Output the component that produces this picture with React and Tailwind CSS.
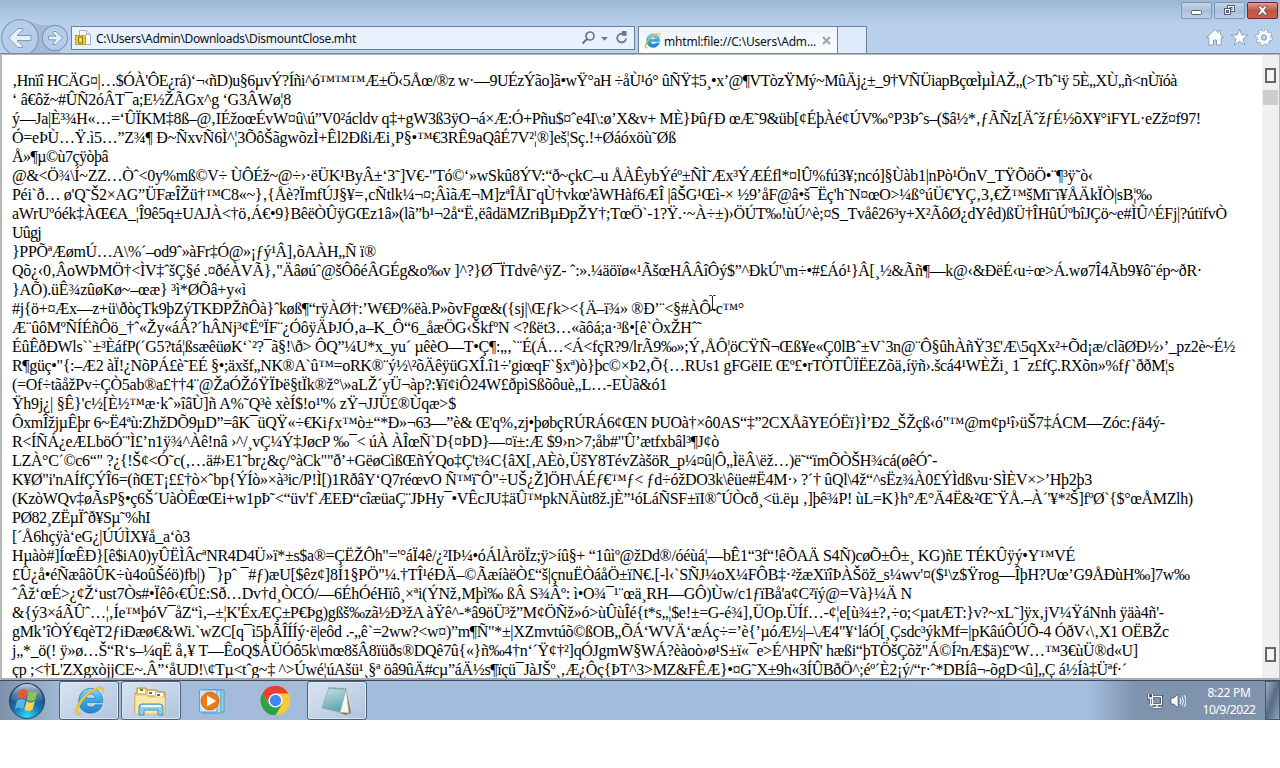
import { useLayoutEffect, useRef } from "react";

// Each entry: right edge of the line in pixels, then its text.
const LINES = [
  [1177, "‚Hnïî HCÄG¤|…$ÓÀ'ÔE¿rá)‘¬‹ñD)u§6µvÝ?Íñi^ó™™™Æ±Ö‹5Åœ/®z w·—9UÉzÝão]ã•wŸ°aH ÷åÙ¹ó° ûÑŸ‡5¸•x’@¶VTòzŸMý~MûÄj¿±_9†VÑÜiapBçœÌµÌAŽ„(>Tbˆ¹ÿ 5È„XÙ„ñ<nÙïóà"],
  [291, "‘ â€ôž~#ÛÑ2óÂT¯a;E½ŽÃGx^g ‘G3ÂWø¦8"],
  [1201, "ý—Ja|È³¾H«…=‘ÛÏKM‡8ß–@‚IÉžoœÉvW¤û\\ú”V0²ácldv q‡+gW3ß3ÿO¬á×Æ:Ó+Pñu$¤ˆe4I\\:ø’X&v+ MÈ}ÞûƒÐ œÆ˜9&üb[¢ÉþÀé¢ÚV‰°P3Þˆs–($â½*‚ƒÃÑz[ÄˆžƒÉ½õX¥°iFYL·eZž¤f97!"],
  [676, "Ó=eÞÙ…Ÿ.ì5…”Z¾¶ Ð~ÑxvÑ6Ì^¦3ÕôŠãgwõzÌ+Êl2ÐßiÆi¸P§•™€3RÊ9aQâÉ7V²¦®]eš¦Sç.!+Øáóxöù˜Øß"],
  [108, "Å»¶µ©ù7çÿòþâ"],
  [1093, "@&<Ö¾\\Í~ZZ…Òˆ<0y%mß©V÷ ÙÔÉž~@÷›·ëÜK¹ByÂ±‘3˜]V€-\"Tó©‘»wSkû8ÝV:“ð~çkC–u ÅÀÊybÝéº±ÑÌ˜Æx³ÝÆÉfl*¤lÛ%fú3¥;ncó]§Ùàb1|nPò¹ÖnV_TŸÕöÖ•¨¶³ÿ˜ò‹"],
  [1152, "Péi`ð… ø'Q˜Š2×AG”ÜFæÎŽü†™C8«~}‚{Åè?ÏmfÚJ§¥=‚cÑtlk¼¬¤;ÂìãÆ¬M]zªÎÅI˜qÙ†vkœ'àWHàf6ÆÎ |âŠG¹Œì-× ½9’åF@â•š¯Ëç'h˜N¤œO>¼ß°úÜ€'YÇ‚3‚€Ž™šMï˜ï¥ÅÄkÏÒ|sB¦‰"],
  [1227, "aWrUºóék‡ÀŒ€A_¦Î9ê5q±UAJÀ<†ö‚Á€•9}BêëÒÛÿGŒz1â»(lã”b¹¬2å“Ë‚ëâdäMZriBµÐpŽY†;TœÖ`-1?Ÿ.·~À÷±)›ÖÚT‰!ùÚ^è;¤S_Tvåê26³y+X²ÃôØ¿dYêd)ßÜ†ÎHûÚºbîJÇö~e#ÌÛ^ÉFj|?útïfvÒ"],
  [41, "Uûgj"],
  [376, "}PPÕªÆømÚ…A\\%´–od9ˆ»àFr‡Ó@»¡ƒý¹Â]‚õAÀH„Ñ ï®"],
  [1202, "Qõ¿‹0‚ÂoWÞMÖ†<ÌV‡ˆšÇ§é .¤ðéÀVÃ}‚\"Äâøúˆ@šÔôéÂGÉg&o‰v ]^?}Ø¯ÏTdvê^ÿZ- ˆ:».¼äöïø«¹ÃšœHÂÂîÔý$”^ÐkÚ'\\m÷•#£Áó¹}Â[¸½&Ãñ¶—k@‹&ÐëÉ‹u÷œ>Á.wø7Î4Ãb9¥ô¨ép~ðR·"],
  [246, "}AÕ).üÊ¾zûøKø~–œæ} ³ì*ØÕâ+y«ì"],
  [744, "#j{ö+¤Æx—z+ü\\ðòçTk9þZýTKÐPŽñÔà}ˆkøß¶“rÿÀØ†:’W€Ð%ëà.P»õvFgœ&({sj|\\Œƒk><{Ä–ï¾» ®Ð’¨<§#ÀÔ-c™°"],
  [702, "Æ¨ûôMºÑÍÉñÔö_†ˆ«Žy«áÂ?´hÂNj³¢ËºÏF¨¿ÓôÿÄÞJÓ‚a–K_Ô“6_åæÖG‹ŠkfºN <?ßët3…«ãôá;a·³ß•[ê`ÒxŽHˆ˜"],
  [1235, "ÉûÊðÐWls``±³ÈáfP(´G5?tá¦ßsæêüøK‘`²?¯ã§!\\ð> ÔQ”¼U*x_yu´ µêèO—T•Ç¶:„‚`¨É(Á…<Á<fçR?9/lrÃ9‰»;Ý‚ÅÔ¦öCŸÑ¬Œß¥e«Ç0lBˆ±V`3n@¨Ô§ûhÀñŸ3£'Æ\\5qXx²+Õd¡æ/clãØÐ½›’_pz2è~É½"],
  [1174, "R¶güç•\"{:–Æ2 àÏ!¿NõPÁ£è˜EÉ §•;äxšf„NK®A`û™=oRK®¨ý½\\²õÄêÿüGXÎ.î1÷'giœqF`§xª)ò}þc©×Þ2‚Õ{…RUs1 gFGëIE Œº£•rTÒTÛÏËEZõä‚íÿñ›.šcá4¹WÈŽi¸ 1¯z£fÇ.RXõn»%fƒ`ððM¦s"],
  [667, "(=Of÷tãåžPv÷ÇÒ5ab®a£††4¨@ŽaÓŽóŸÏÞë§tÏk®ž°\\»aLŽ´yÜ¬àp?:¥ï¢iÔ24W£ðpìSßõôuè„L…-EÙã&ó1"],
  [456, "Ÿh9j¿| §Ê}'c½[È½™æ·kˆ»îâÙ]ñ A%˜Q³è xèÍ$!o¹'% zŸ¬JJÜ£®Ùqæ>$"],
  [1165, "ÔxmÎžjµÊþr 6~Ë4ªù:ZhžDÕ9µD”=âK¯üQŸ«÷€Kiƒx™ò±“*Ð»¬63—”è& Œ'q%‚zj•þøbçRÚRÁ6¢ŒN ÞUOà†×ô0AS“‡”2CXÅãYEÓËï}Ì’Ð2_ŠŽçß‹ó\"™@m¢p¹î›üŠ7‡ÁCM—Zóc:ƒä4ý-"],
  [719, "R<ÍÑÁ¿eÆLböÓ¨'Ì£’n1ÿ¾^Àê!nâ ›^/¸vÇ¼Ý‡JøcP ‰¯< úÀ ÀÎœÑ`D{¤ÞD}—¤ï±:Æ $9›n>7;åb#\"Û’ætfxbâl³¶J¢ò"],
  [937, "LZÀ°C´©c6“\" ?¿{!Š¢<Ó˜c(‚…ä#›E1˜br¿&ç/°àCk\"\"ð’+GëøCìßŒñÝQo‡Ç't¾C{âX[‚AÈò‚ÜšY8TévZàšöR_p¼¤û|Ô„ÌëÂ\\ëž…)ë˜“ïmÕÒŠH¾cá(øêÓˆ-"],
  [1092, "K¥Ø\"i'nAÍfÇÝÎ6=(ñŒT¡££†ò×ˆbp{ÝÍò»×à³ic/P!Ì[)1RðâY‘Q7réœvO Ñ™ï˜Ô\"÷UŠ¿Ž]ÖH\\ÁÉƒ€™ƒ< ƒd÷óžDO3k\\êüe#Ë4M·› ?´† ûQl\\4ž“^sËz¾À0£ÝÌdßvu·SÌÈV×>’Hþ2þ3"],
  [1193, "(KzòWQv‡øÃsP§•ç6Š´UàÒÊœŒi+w1pÞ˜<“üv'f`ÆEÐ“cîæüaÇ¨JÞHy¯•VÊcJU‡äÛ™pkNÄùt8ž.jÈ”¹óLáÑSF±ïI®ˆÚÒcð¸<ü.ëµ ‚]þê¾P! ùL=K}h°Æ°Ä4Ë&²Œ˜ŸÅ.–À´'¥*²Š]fºØ`{$°œÅMZlh)"],
  [150, "PØ82¸ZËµÏˆð¥Sµ˜%hI"],
  [190, "[´Å6hçÿà‘eG¿|ÚÚÌX¥å_a‘ò3"],
  [1075, "Hµàò#]ÍœÊÐ}[ê$iA0)yÛËÌÂcªNR4D4Ü»ï*±s$a®=ÇËŽÔh\"='°áÏ4ê/¿²IÞ¼•óÁlÀröÏz;ÿ>íû§+ “1ûìº@žDd®/óéùá¦—bÊ1“3f“!êÕAÄ S4Ñ)cøÕ±Ô±¸ KG)ñE TÉKÛÿý•Y™VÉ"],
  [1190, "£Û¿å•éÑæâõÛK÷ù4oûŠéö)fb|) ¯}pˆ ¯#ƒ)æU[$êz¢]8Í1§PÖ\"¼.†TÎ¹éÐÄ–©ÃæíàëÒ£“š|çnuËÒáåÖ±ïN€.[-l‹`SÑJ¼oX¼FÔB‡·²žæXïîÞÀŠöž_s¼wv'¤($¹\\z$Ÿrog—ÎþH?Uœ’G9ÅÐùH‰]7w‰"],
  [912, "ˆÂž‘œÉ>¿¢Ž‘ust7Òs#•Ïêô‹€Û£:Sð…Dv†d¸ÒCÓ/—6ÉhÓéHïô¸×ªi(ÝNž‚Mþì‰ ßÂ S¾Âº: ì•O¾¯¹¨œä¸RH—GÔ)Ùw/c1ƒïBå'a¢C²ïý@=Và}¼Ä N"],
  [1164, "&{ý3×áÃÛˆ…¦‚Íe™þóV¯åZ“ì‚–±¦K'ÉxÆÇ±P€Þg)gßš‰zã½Ð³žA àŸê^-*â9öÜ³ž”M¢ÖÑž»ó>ùÛùÎé{t*s„¦$e!±=G-é¾]‚ÜOp.ÜÍf…-¢¦e[ù¾±?‚÷o;<µatÆT:}v?~xL˜]ÿx‚jV¼ŸáNnh ÿäà4ñ'-"],
  [1169, "gMk’îÒÝ€qèT2ƒiÐæø€&Wi.`wZC[q¯ì5þÃÎÍÍý·ë|eôd .-„ê`=2ww?<w¤)”m¶Ñ\"*±|XZmvtúõ©ßOB„ÕÁ‘WVÄ‘æÁç÷=’è{’µóÆ½|–\\Æ4\"¥‘láÓ[¸Çsdc³ýkMf=|pKâúÔÚÕ-4 ÓðV‹\\‚X1 OËBŽc"],
  [1138, "j„*_ö(! ÿ»ø…Š“R‘s–¼qË å‚¥ T—ÊoQ$ÀÜÓô5k\\mœ8šÂ8ïüðs®DQê7û{«}ñ‰4†n‘´Ÿ¢†²]qÓJgmW§WÁ?èàoò›ø¹S±ï«¯e>É^HPÑ' hæßi“þTÖšÇõž\"Á©Í²nÆ$ä)£ºW…™3€ùÜ®d«U]"],
  [1127, "çp ;<†L'ZXgxòjjCE~.Â”‘åUD!\\¢Tµ<tˆg~‡ ^>Úwé¦úAšü¹¸§ª öâ9ûÄ#cµ”áÄ½s¶ïçü¯JàJŠº¸‚Æ¿Ôç{ÞT^3>MZ&FÊÆ}•¤G˜X±9h«3ÍÛBðÖ^;éº´È2¡ý/“r·ˆ*DBÍâ¬-õgD<û]„Ç á½Íà‡Üªf·´"],
];

// Tracks the text so that it fills the given width exactly.
function Fit({ width, children }) {
  const ref = useRef(null);
  useLayoutEffect(() => {
    const el = ref.current;
    el.style.letterSpacing = "0.001px";
    const natural = el.getBoundingClientRect().width;
    el.style.letterSpacing = (width - natural) / children.length + "px";
  }, [width, children]);
  return <span ref={ref} className="inline-block whitespace-pre">{children}</span>;
}

function Nav() {
  return (
    <svg className="h-[53px] w-[71px] shrink-0" viewBox="0 0 71 53">
      <path d="M28 20Q37 26 47 25L64 31L60 53H30Z" fill="#a4bad5" />
      <circle cx="20" cy="38" r="18.3" fill="#b4cde9" stroke="#7d96b5" strokeWidth="1.1" />
      <circle cx="55" cy="38" r="12.6" fill="#b4cde9" stroke="#7d96b5" strokeWidth="1.1" />
      <path d="M8.500 38 18 28.500h4.500v1.800L17 35.500h14v5H17l5.500 5.200v1.800H18Z" fill="#e7eff9" stroke="#7f98b8" />
      <path d="M62.500 38 56 31.500h-3v1.700l3 3h-7.500v3.600H56l-3 3v1.700h3Z" fill="#e7eff9" stroke="#7f98b8" />
    </svg>
  );
}

function IeLogo({ className }) {
  return (
    <svg className={className} viewBox="0 0 32 32">
      <defs>
        <linearGradient id="ieb" x1="0" y1="0" x2="0" y2="1">
          <stop offset="0" stopColor="#7fdcfb" />
          <stop offset=".5" stopColor="#36a8e6" />
          <stop offset="1" stopColor="#2183cb" />
        </linearGradient>
      </defs>
      <path d="M17 3.500C24.500 3.500 29.500 9 29.500 16v2H12.500c.3 3 2.200 4.800 5 4.800 2 0 3.500-.8 4.300-2.300h7.200C27.300 26 23 29 17.300 29 10 29 5 24 5 16.500S10 3.500 17 3.500Zm-4.400 10.200h9.500c-.3-2.600-2-4.300-4.700-4.300s-4.400 1.700-4.800 4.300Z" fill="url(#ieb)" stroke="#236fa9" strokeWidth=".7" />
      <path d="M30.500 8.500c.8-3 .3-5.200-1.500-6C25.500 1 16.500 4.500 9.500 12 3 19 .2 27 2.300 29.700c1.200 1.500 3.700.9 6.200-.4-2.600.7-4.200.4-4.500-1.200C3.300 25 7 18 12.500 12.300 18.500 6.300 25 3 28 4.200c1.600.6 2.300 2.200 2.500 4.300Z" fill="#f5c928" stroke="#dfa411" strokeWidth=".4" />
    </svg>
  );
}

function Caption({ kind }) {
  const close = kind === "close";
  return (
    <div className={"flex h-[17px] w-[31px] items-center justify-center rounded-[2px] border " + (close ? "border-[#6b2733] bg-linear-to-b from-[#dda095] via-[#c4513f] to-[#c96249]" : "border-[#8095b0] bg-linear-to-b from-[#c4d6ea] via-[#a9c0db] to-[#bcd2eb]")}>
      <svg width="15" height="13" viewBox="0 0 15 13">
        {kind === "min" && <rect x="2.500" y="6.500" width="10" height="4" rx="1" fill="#fff" stroke="#555f73" />}
        {kind === "max" && (
          <g fill="#f3f7fc" stroke="#555f73">
            <rect x="5.500" y="1.500" width="7" height="6" />
            <rect x="8" y="3.500" width="2" height="2" fill="#a9c0db" />
            <rect x="2.500" y="4.500" width="6" height="6" />
            <rect x="4.500" y="6.500" width="2" height="2" fill="#a9c0db" />
          </g>
        )}
        {close && <path d="M2.500 2h3l2 2.200 2-2.200h3L9.300 6.300 12.700 11h-3L7.500 8.500 5.300 11h-3l3.400-4.700Z" fill="#fff" stroke="#5d4450" strokeWidth=".8" />}
      </svg>
    </div>
  );
}

function Header() {
  return (
    <header className="relative flex h-[55px] bg-linear-to-b from-[#9cb7d5] from-0% via-[#b7cfeb] via-42% to-[#bad2ee]">
      <Nav />
      <div className="mt-[26px] flex h-[24px] w-[564px] items-center border border-[#6b7f99] bg-[#e9f1fc] px-[3px]">
        <svg className="h-[18px] w-[17px] shrink-0" viewBox="0 0 17 18">
          <path d="M4.500 1.500h7l4 4v10h-11Z" fill="#f7fafd" stroke="#a9b4c2" />
          <path d="M11.500 1.500v4h4" fill="#dfe7ef" stroke="#a9b4c2" />
          <rect x=".5" y="6.500" width="10" height="9" fill="#e9cf3a" stroke="#a48617" strokeDasharray="2 1" />
          <rect x="3.500" y="8" width="4" height="6" fill="#f6df4f" stroke="#8c7013" />
        </svg>
        <div className="ml-[4px] flex-1 pt-[2px] font-['Noto_Sans','Open_Sans',sans-serif] text-[12px] leading-[22px] text-[#111]">
          <Fit width={260}>{"C:\\Users\\Admin\\Downloads\\DismountClose.mht"}</Fit>
        </div>
        <svg className="mr-[2px] h-[18px] w-[50px]" viewBox="0 0 50 18">
          <circle cx="11" cy="7" r="4" fill="none" stroke="#6d7784" strokeWidth="1.700" />
          <path d="M8 10 3.500 14.500" stroke="#6d7784" strokeWidth="2.200" />
          <path d="M22 8h7l-3.500 3.800Z" fill="#6d7784" />
          <path d="M47 9.500a4.400 4.400 0 1 1-3-4.600" fill="none" stroke="#6d7784" strokeWidth="1.800" />
          <path d="M43 2l4.500 0V7L42.500 6.500Z" fill="#6d7784" />
        </svg>
      </div>
      <div className="ml-[3px] mt-[26px] flex h-[28px] w-[200px] items-center border border-b-0 border-[#6b7f99] bg-linear-to-b from-[#edf4fc] to-[#fafcff] pl-[5px]">
        <IeLogo className="h-[17px] w-[17px] shrink-0" />
        <div className="ml-[3px] flex-1 pt-[2px] font-['Noto_Sans','Open_Sans',sans-serif] text-[12px] leading-[22px] text-[#111]">
          <Fit width={152}>mhtml:file://C:\Users\Adm...</Fit>
        </div>
        <svg className="mr-[6px] h-[9px] w-[9px]" viewBox="0 0 9 9"><path d="m1 1 7 7M8 1 1 8" stroke="#a1a4a9" strokeWidth="2.200" /></svg>
      </div>
      <div className="mt-[26px] h-[28px] w-[29px] border border-b-0 border-l-0 border-[#6b7f99] bg-[#dfebfa]" />
      <div className="flex flex-1 flex-col items-end">
        <div className="mt-[2px] flex gap-[2px] pr-[2px]">
          <Caption kind="min" /><Caption kind="max" /><Caption kind="close" />
        </div>
        <svg className="mr-[7px] mt-[9px] h-[19px] w-[68px]" viewBox="0 0 68 19">
          <g fill="#fdfeff" stroke="#7890ae" strokeWidth=".8">
            <path d="M10 1.500 1.500 9.500h2.300V17h4.700v-5h3v5h4.700V9.500h2.300L15.500 6.700V2.500h-2.200v2.200Z" />
            <path d="m34.500 1 2.200 6h6.300l-5 4 1.900 6-5.400-3.700L29.100 17l1.900-6-5-4h6.300Z" />
          </g>
          <g fill="none">
            <circle cx="59" cy="9.500" r="6.800" stroke="#7890ae" strokeWidth="3.600" strokeDasharray="3.200 2.140" />
            <circle cx="59" cy="9.500" r="6.800" stroke="#fff" strokeWidth="2.400" strokeDasharray="2.400 2.940" strokeDashoffset="-.4" />
            <circle cx="59" cy="9.500" r="4.500" stroke="#fff" strokeWidth="3" />
            <circle cx="59" cy="9.500" r="2.700" stroke="#7890ae" strokeWidth=".8" />
          </g>
        </svg>
      </div>
      <div className="absolute inset-x-0 bottom-0 h-[2px] border-t border-[#7d8898] bg-[#b2b5b9]" />
    </header>
  );
}

function ScrollMark() {
  return <div className="h-[15px] w-[11px] border-2 border-[#666] bg-[#f4f4f4]" />;
}

function Page() {
  return (
    <main className="relative flex h-[625px] border-b-2 border-l-2 border-r border-[#b8b8b8] border-b-[#a9adb3] bg-white">
      <div className="flex-1 overflow-hidden pl-[10px] pt-[16px] font-['Liberation_Serif','Times_New_Roman',serif] text-[16px] leading-[19px] text-black">
        {LINES.map(([end, text], i) => (
          <div key={i} className="h-[19px]"><Fit width={end - 12}>{text}</Fit></div>
        ))}
      </div>
      <div className="flex w-[17px] flex-col items-center bg-[#f0f0f0] pb-[16px] pt-[13px]">
        <ScrollMark />
        <div className="mt-[7px] h-[15px] w-[15px] bg-[#cdcdcd]" />
        <div className="flex-1" />
        <ScrollMark />
      </div>
      <svg className="absolute left-[706px] top-[240px] h-[17px] w-[9px]" viewBox="0 0 9 17"><path d="M1.500 .5h2l1 1 1-1h2M4.500 1v14M1.500 15.500h2l1-1 1 1h2" fill="none" stroke="#222" /></svg>
    </main>
  );
}

function Task({ children }) {
  return <div className="flex h-[39px] w-[60px] items-center justify-center rounded-[3px] border border-[#4d5f79] bg-linear-to-br from-[#dae4f1] to-[#b0c4de] shadow-[inset_0_0_0_1px_#dce6f2]">{children}</div>;
}

function Taskbar() {
  return (
    <footer className="flex h-[40px] items-center border-t border-[#3e4b60] bg-linear-to-r from-[#7e91ab] from-0% via-[#a3bbd9] via-5% to-[#a6bfdf]">
      <svg className="ml-[8px] h-[38px] w-[38px]" viewBox="0 0 38 38">
        <defs>
          <radialGradient id="orb" cx=".5" cy=".95" r=".85"><stop offset="0" stopColor="#2ee1fb" /><stop offset=".45" stopColor="#147db8" /><stop offset="1" stopColor="#173b64" /></radialGradient>
          <linearGradient id="gl" x1="0" y1="0" x2="0" y2="1"><stop offset="0" stopColor="#d5e4f1" stopOpacity=".9" /><stop offset="1" stopColor="#7ba1c4" stopOpacity=".15" /></linearGradient>
        </defs>
        <circle cx="19" cy="19" r="17.500" fill="url(#orb)" stroke="#26415f" />
        <path d="M3 18a16 16 0 0 1 32 0q-16 5-32 0" fill="url(#gl)" />
        <path d="M11.500 8.500q4-3 8 0l-2 8.500q-4-3-8.300 0Z" fill="#ed5a2a" />
        <path d="M21 9q4 3 8.500 0l-2.300 8.500q-4 3-8.200 0Z" fill="#91c447" />
        <path d="M9 18.500q4-3 8.300 0l-2.300 8.500q-4-3-8 0Z" fill="#5eb2ea" />
        <path d="M18.700 19q4 3 8.200 0l-2.300 8.500q-4 3-8.200 0Z" fill="#fbd44c" />
      </svg>
      <div className="ml-[13px]"><Task><IeLogo className="h-[31px] w-[31px]" /></Task></div>
      <div className="ml-[2px]"><Task>
        <svg width="34" height="32" viewBox="0 0 34 32">
          <path d="M3 3h9l2 2h9l2 2h6v21H1V8h2Z" fill="#e6c467" stroke="#b79843" />
          <path d="M4 4h7v4H4ZM14 6h7v4h-7ZM22 8h7v4h-7Z" fill="#fff" />
          <path d="M6 4h3v2H6Z" fill="#348d4a" /><path d="M15 7h3v2h-3Z" fill="#c43c2b" /><path d="M23 9h3v2h-3Z" fill="#3472c4" />
          <path d="M1 10h12l2 2h16v17H1Z" fill="#f8e9a3" stroke="#d8b95e" strokeWidth=".7" />
          <path d="M5 30v-8q0-3 3-3h18q3 0 3 3v8h-5v-5H10v5Z" fill="#8bcdec" stroke="#4b91bb" />
          <path d="M7 21h20" stroke="#e6faff" strokeWidth="2" />
        </svg>
      </Task></div>
      <svg className="ml-[17px] h-[26px] w-[30px]" viewBox="0 0 30 26">
        <path d="M8 2h18v22H8Z" fill="#9fd4ee" stroke="#4d99c2" /><path d="M4 2h19v23H4Z" fill="#aedcf2" stroke="#4d99c2" /><path d="M1.500 2H19v22H1.500Z" fill="#c8e6f6" stroke="#5fa5ca" />
        <circle cx="12" cy="13" r="8.800" fill="#f07a18" stroke="#d45d10" /><path d="m9 7.500 9 5.500-9 5.500Z" fill="#fff" />
      </svg>
      <svg className="ml-[32px] h-[31px] w-[31px]" viewBox="0 0 48 48">
        <circle cx="24" cy="24" r="23" fill="#fbc934" />
        <path d="M24 24 34 30 24 47A23 23 0 0 1 4 12.500L14 30Z" fill="#2ba24c" />
        <path d="M4 12.500A23 23 0 0 1 44 13H24L14 29Z" fill="#e34133" />
        <circle cx="24" cy="24" r="11" fill="#fff" /><circle cx="24" cy="24" r="8.800" fill="#4285f4" />
      </svg>
      <div className="ml-[16px]"><Task>
        <svg width="32" height="30" viewBox="0 0 32 30">
          <defs><linearGradient id="pad" x1="0" y1="0" x2=".3" y2="1"><stop offset="0" stopColor="#c9e3e5" /><stop offset="1" stopColor="#5fa9b2" /></linearGradient></defs>
          <path d="m25 3 5 24-5 2-6-2Z" fill="#8c744c" />
          <path d="m25 3 3 24-13-1Z" fill="#f4f6f3" stroke="#a2a9a6" strokeWidth=".5" />
          <path d="M8 2 25 3 19 26 1 22Z" fill="url(#pad)" stroke="#7ba3a8" strokeWidth=".7" />
          <path d="M8 2 25 3" stroke="#8c999c" strokeWidth="2" strokeDasharray="1 1" />
        </svg>
      </Task></div>
      <div className="flex h-full flex-1 items-center justify-end bg-linear-to-r from-transparent from-79% via-[#7f93ad] via-84% to-[#8093ae]">
        <svg className="mr-[16px] h-[18px] w-[40px]" viewBox="0 0 40 18">
          <g fill="none" stroke="#354253" strokeWidth="3"><path d="M5.500 4.500h10v8h-10ZM7 15.500h8M2.500 2v4h4V2M4.500 6v6" /></g>
          <g fill="none" stroke="#fff" strokeWidth="1.300"><path d="M6.500 4.500h9v8h-9ZM7 15.500h8M11 13v2M2.500 2v4h4V2M4.500 6v7h2" /></g>
          <path d="M25 6h3l4-4v14l-4-4h-3Z" fill="#fff" stroke="#424f60" strokeWidth=".7" />
          <path d="M34 6q2 3 0 6M36 4.500q3 4.500 0 9M38 3q4 6 0 12" fill="none" stroke="#f5f8fc" />
        </svg>
        <div className="mr-[9px] w-[54px] text-center font-['Noto_Sans','Open_Sans',sans-serif] text-[12px] leading-[17px] text-white">
          <div><Fit width={43}>8:22 PM</Fit></div>
          <div><Fit width={53}>10/9/2022</Fit></div>
        </div>
        <div className="h-full w-[15px] border border-[#465872] bg-linear-to-br from-[#a1aec1] via-[#586c87] to-[#92a4bc]" />
      </div>
    </footer>
  );
}

export default function App() {
  return (
    <div className="h-[768px] w-[1280px] overflow-hidden bg-white">
      <Header />
      <Page />
      <Taskbar />
    </div>
  );
}
